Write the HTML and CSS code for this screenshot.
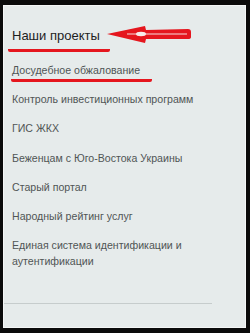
FILE: index.html
```html
<!DOCTYPE html>
<html lang="ru">
<head>
    <meta charset="UTF-8">
    <title>Наши проекты</title>
    <link rel="stylesheet" href="styles.css">
</head>
<body>
    <div class="panel">
        <div class="heading">
            <h3>Наши проекты</h3>
        </div>
        <svg class="arrow" width="88" height="22" viewBox="0 0 88 22">
            <path d="M2 10 L40 2 L41 6 L83 5 Q86 5 86 8 L86 13 Q86 15 83 15 L41 15 L40 19 Z" fill="#e5161e"/>
            <path d="M22 10 L82 10" stroke="#f6dede" stroke-width="1.2"/>
            <ellipse cx="36" cy="10" rx="5" ry="2.2" fill="#f8ecec"/>
        </svg>
        <ul class="links">
            <li class="marked"><a href="#">Досудебное обжалование</a></li>
            <li><a href="#">Контроль инвестиционных программ</a></li>
            <li><a href="#">ГИС ЖКХ</a></li>
            <li><a href="#">Беженцам с Юго-Востока Украины</a></li>
            <li><a href="#">Старый портал</a></li>
            <li><a href="#">Народный рейтинг услуг</a></li>
            <li><a href="#">Единая система идентификации и аутентификации</a></li>
        </ul>
        <div class="rule"></div>
    </div>
</body>
</html>
```

FILE: styles.css
```css
body {
    margin: 0;
    background-color: #0b0b0b;
    font-family: 'Liberation Sans', Arial, sans-serif;
}
.panel {
    position: relative;
    margin: 5px 4px 0 3px;
    height: 323px;
    box-sizing: border-box;
    background-color: #e6ebeb;
    border: 1px solid #f4f6f6;
    padding-top: 20px;
}
.heading {
    padding-left: 4px;
}
h3 {
    margin: 0;
    font-size: 13px;
    font-weight: normal;
    color: #1e1e1e;
    display: inline-block;
    padding: 0 10px 5px 4px;
    border-bottom: 3px solid #e5161e;
    border-radius: 2px;
    line-height: 16px;
}
.arrow {
    position: absolute;
    left: 101px;
    top: 18px;
}
.links {
    list-style: none;
    margin: 8px 0 0 0;
    padding: 0 30px 0 8px;
}
.links li {
    margin-bottom: 13.3px;
    line-height: 16px;
    font-size: 10.6px;
}
.links a {
    color: #505555;
    text-decoration: none;
}
.links .marked {
    display: inline-block;
    margin-left: -1px;
    padding: 0 12px 1px 1px;
    border-bottom: 3px solid #e5161e;
    border-radius: 2px;
    margin-bottom: 9px;
}
.rule {
    margin-top: 34px;
    width: 208px;
    border-top: 1px solid #c6cccc;
}
```
